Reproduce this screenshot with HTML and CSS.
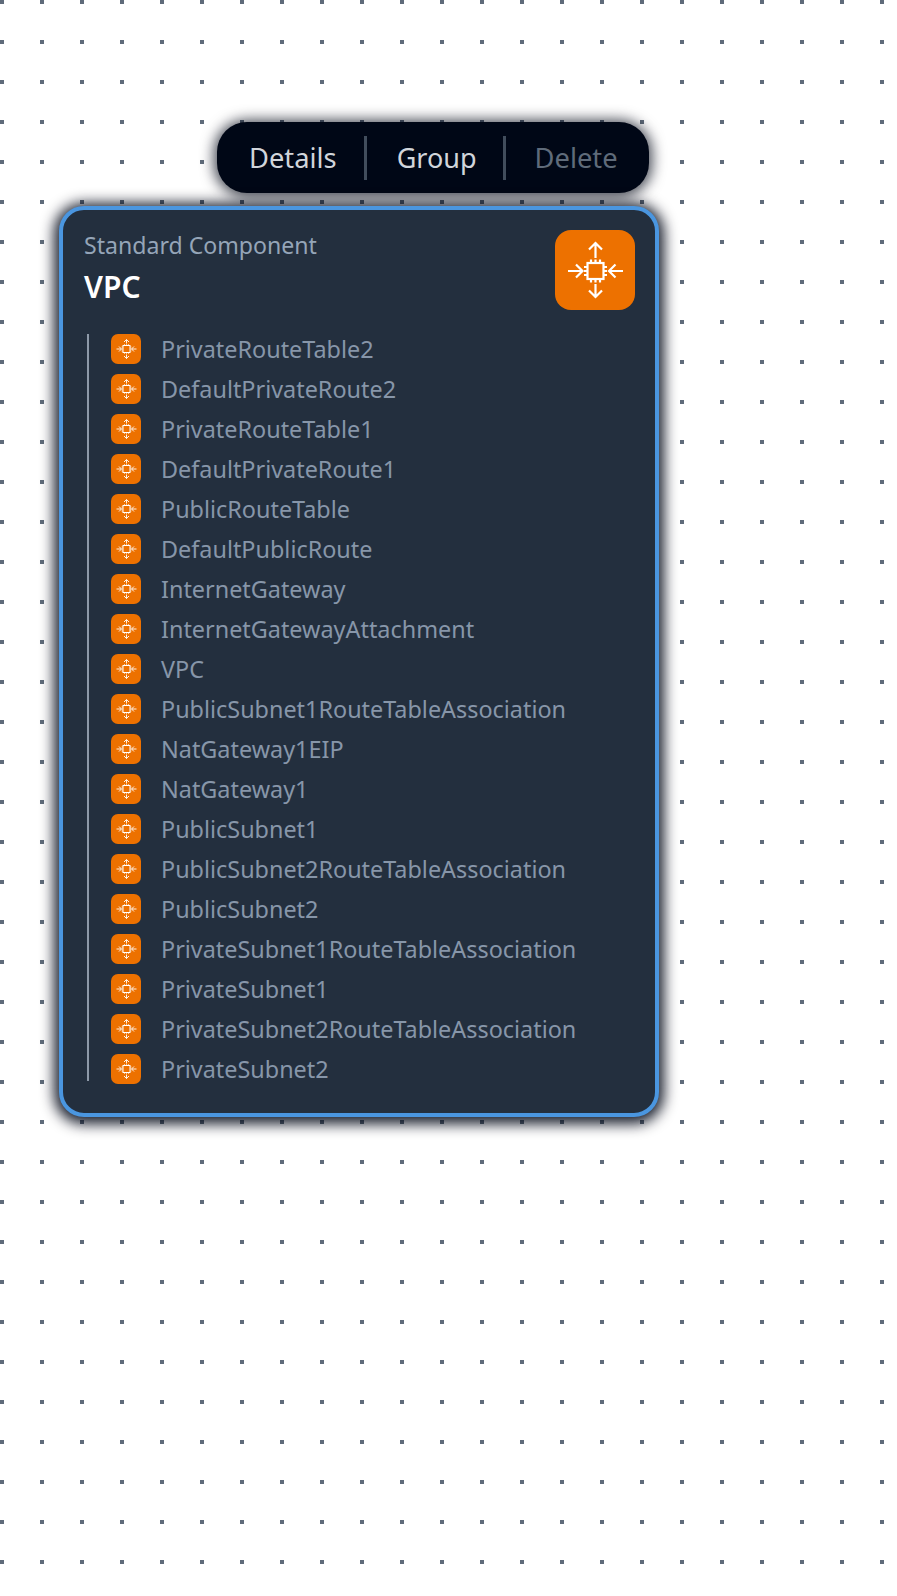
FILE: index.html
```html
<!DOCTYPE html>
<html lang="en">
<head>
    <meta charset="UTF-8">
    <meta name="viewport" content="width=device-width, initial-scale=1.0">
    <title>VPC</title>
    <link rel="stylesheet" href="styles.css">
</head>
<body>
    <svg class="defs" width="0" height="0">
        <symbol id="vpc-icon" viewBox="0 0 80 80">
            <g fill="none" stroke="#fff" stroke-width="2.200">
                <rect x="32.500" y="33" width="16" height="16"/>
                <path d="M36 29.500v3.500M40.500 29.500v3.500M45 29.500v3.500M36 49v3.500M40.500 49v3.500M45 49v3.500M29 37h3.500M29 41h3.500M29 45h3.500M48.500 37h3.500M48.500 41h3.500M48.500 45h3.500"/>
                <path d="M40.500 13v15M34 19.500l6.500-6.500 6.500 6.500"/>
                <path d="M40.500 54v13M34 60.500l6.500 6.500 6.500-6.500"/>
                <path d="M13 41h14M21 34.500l6.500 6.500-6.500 6.500"/>
                <path d="M54 41h14M60.500 34.500L54 41l6.500 6.500"/>
            </g>
        </symbol>
        <symbol id="vpc-icon-small" viewBox="0 0 30 30">
            <g fill="none" stroke="#fff" stroke-width="1">
                <rect x="12" y="11.500" width="7" height="7"/>
                <path stroke-opacity="0.6" d="M13.500 10v1.500M15.500 10v1.500M17.500 10v1.500M13.500 18.500V20M15.500 18.500V20M17.500 18.500V20M10.500 13H12M10.500 15H12M10.500 17H12M19 13h1.500M19 15h1.500M19 17h1.500"/>
                <path stroke-opacity="0.9" d="M15.500 5.500v4M13 8l2.500-2.500L18 8"/>
                <path stroke-opacity="0.9" d="M15.500 20.500v4M13 22l2.500 2.500L18 22"/>
                <path stroke-opacity="0.9" d="M5.500 15H10M8 12.500l2.500 2.500L8 17.500"/>
                <path stroke-opacity="0.9" d="M21 15h4.500M23 12.500L20.500 15l2.500 2.500"/>
            </g>
        </symbol>
    </svg>
    <div class="canvas">
        <div class="toolbar">
            <span class="tool">Details</span>
            <span class="tool">Group</span>
            <span class="tool disabled">Delete</span>
        </div>
        <div class="card">
            <div class="card-head">
                <div>
                    <div class="card-type">Standard Component</div>
                    <div class="card-title">VPC</div>
                </div>
                <div class="icon-big"><svg width="80" height="80"><use href="#vpc-icon"/></svg></div>
            </div>
            <ul class="tree">
                <li><span class="icon-small"><svg width="30" height="30"><use href="#vpc-icon-small"/></svg></span>PrivateRouteTable2</li>
                <li><span class="icon-small"><svg width="30" height="30"><use href="#vpc-icon-small"/></svg></span>DefaultPrivateRoute2</li>
                <li><span class="icon-small"><svg width="30" height="30"><use href="#vpc-icon-small"/></svg></span>PrivateRouteTable1</li>
                <li><span class="icon-small"><svg width="30" height="30"><use href="#vpc-icon-small"/></svg></span>DefaultPrivateRoute1</li>
                <li><span class="icon-small"><svg width="30" height="30"><use href="#vpc-icon-small"/></svg></span>PublicRouteTable</li>
                <li><span class="icon-small"><svg width="30" height="30"><use href="#vpc-icon-small"/></svg></span>DefaultPublicRoute</li>
                <li><span class="icon-small"><svg width="30" height="30"><use href="#vpc-icon-small"/></svg></span>InternetGateway</li>
                <li><span class="icon-small"><svg width="30" height="30"><use href="#vpc-icon-small"/></svg></span>InternetGatewayAttachment</li>
                <li><span class="icon-small"><svg width="30" height="30"><use href="#vpc-icon-small"/></svg></span>VPC</li>
                <li><span class="icon-small"><svg width="30" height="30"><use href="#vpc-icon-small"/></svg></span>PublicSubnet1RouteTableAssociation</li>
                <li><span class="icon-small"><svg width="30" height="30"><use href="#vpc-icon-small"/></svg></span>NatGateway1EIP</li>
                <li><span class="icon-small"><svg width="30" height="30"><use href="#vpc-icon-small"/></svg></span>NatGateway1</li>
                <li><span class="icon-small"><svg width="30" height="30"><use href="#vpc-icon-small"/></svg></span>PublicSubnet1</li>
                <li><span class="icon-small"><svg width="30" height="30"><use href="#vpc-icon-small"/></svg></span>PublicSubnet2RouteTableAssociation</li>
                <li><span class="icon-small"><svg width="30" height="30"><use href="#vpc-icon-small"/></svg></span>PublicSubnet2</li>
                <li><span class="icon-small"><svg width="30" height="30"><use href="#vpc-icon-small"/></svg></span>PrivateSubnet1RouteTableAssociation</li>
                <li><span class="icon-small"><svg width="30" height="30"><use href="#vpc-icon-small"/></svg></span>PrivateSubnet1</li>
                <li><span class="icon-small"><svg width="30" height="30"><use href="#vpc-icon-small"/></svg></span>PrivateSubnet2RouteTableAssociation</li>
                <li><span class="icon-small"><svg width="30" height="30"><use href="#vpc-icon-small"/></svg></span>PrivateSubnet2</li>
            </ul>
        </div>
    </div>
</body>
</html>
```

FILE: styles.css
```css
html, body {
    margin: 0;
    padding: 0;
}
body {
    font-family: "Noto Sans", sans-serif;
    background-color: #fff;
    background-image: radial-gradient(circle at 2px 2px, #5f6b7a 2.3px, transparent 2.3px);
    background-size: 40px 40px;
    height: 1596px;
    overflow: hidden;
}
.defs {
    display: block;
    height: 0;
}
.canvas {
    display: flex;
    flex-direction: column;
    align-items: flex-start;
    padding: 122px 0 0 59px;
}
.toolbar {
    display: flex;
    align-items: center;
    height: 71px;
    margin-left: 158px;
    padding: 0 15px 0 16px;
    background-color: #000716;
    border-radius: 30px;
    box-shadow: 0 1px 14px 3px rgba(0, 7, 22, 0.75);
}
.tool {
    display: flex;
    align-items: center;
    box-sizing: border-box;
    height: 44px;
    padding: 0 26px 1px 30px;
    color: #d1d5db;
    font-size: 27px;
    border-right: 3px solid #414d5c;
}
.tool:first-child {
    padding-left: 16px;
    padding-right: 27px;
    font-size: 27.300px;
}
.tool.disabled {
    padding-left: 29px;
    padding-right: 16px;
    color: #5f6b7a;
    border-right: 0;
    font-size: 27.300px;
}
.card {
    box-sizing: border-box;
    width: 600px;
    height: 911px;
    margin-top: 13px;
    padding: 20px 20px 0 21px;
    background-color: #232f3e;
    border: 4px solid #4a96e0;
    border-radius: 25px;
    box-shadow: 0 2px 14px 5px rgba(0, 7, 22, 0.9);
}
.card-head {
    display: flex;
    justify-content: space-between;
    align-items: flex-start;
}
.card-type {
    margin-top: 1px;
    color: #95a5b8;
    font-size: 23.100px;
    line-height: 28px;
}
.card-title {
    margin-top: 8px;
    color: #fff;
    font-size: 30px;
    font-weight: 600;
    line-height: 40px;
}
.icon-big {
    width: 80px;
    height: 80px;
    background-color: #ed7100;
    border-radius: 16px;
}
.icon-big svg, .icon-small svg {
    display: block;
}
.tree {
    list-style: none;
    display: flex;
    flex-direction: column;
    gap: 10px;
    margin: 24px 0 0 3px;
    padding: 0 0 0 22px;
    border-left: 2px solid #8d99a8;
}
.tree li {
    display: flex;
    align-items: center;
    gap: 20px;
    height: 30px;
    color: #8796a9;
    font-size: 23.400px;
}
.tree li:last-child {
    margin-bottom: -3px;
}
.icon-small {
    flex: none;
    width: 30px;
    height: 30px;
    background-color: #ed7100;
    border-radius: 7px;
}
```
